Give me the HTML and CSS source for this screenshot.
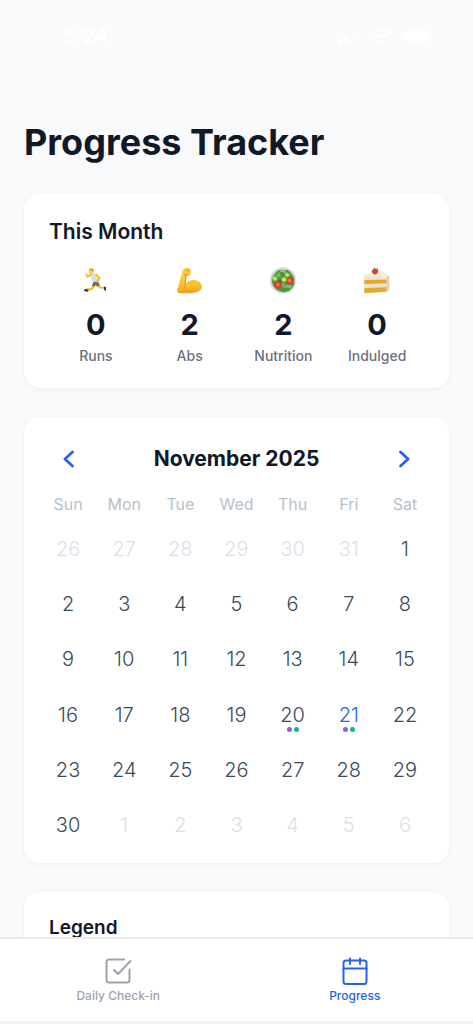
FILE: index.html
```html
<!DOCTYPE html>
<html lang="en">
<head>
<meta charset="utf-8">
<meta name="viewport" content="width=device-width, initial-scale=1">
<title>Progress Tracker</title>
<link rel="stylesheet" href="styles.css">
</head>
<body>
<div class="app">
  <div class="status">
    <span class="status-time">5:24</span>
    <div class="status-icons">
      <svg width="26" height="16" viewBox="0 0 26 16" aria-hidden="true"><rect x="1" y="10" width="4" height="5" rx="1"/><rect x="7" y="7" width="4" height="8" rx="1"/><g opacity=".3"><rect x="13" y="4" width="4" height="11" rx="1"/><rect x="19" y="1" width="4" height="14" rx="1"/></g></svg>
      <svg width="20" height="16" viewBox="0 0 20 16" aria-hidden="true"><g fill="none" stroke="#fff" stroke-width="3"><path d="M1 5.500a13 13 0 0 1 18 0"/><path d="M4.500 9a8 8 0 0 1 11 0"/></g><path d="M10 15l-3-3a4.500 4.500 0 0 1 6 0z"/></svg>
      <svg width="34" height="16" viewBox="0 0 34 16" aria-hidden="true"><rect x="1" y="1" width="29" height="14" rx="4.500" fill="none" stroke="#fff" opacity=".4"/><rect x="3" y="3" width="25" height="10" rx="3"/><path d="M31.500 6q2 2 0 4z" opacity=".4"/></svg>
    </div>
  </div>
  <main class="content">
    <h1 class="title">Progress Tracker</h1>

    <section class="card summary">
      <h2 class="card-title">This Month</h2>
      <div class="stats">
        <div class="stat">
          <svg class="emoji" viewBox="0 0 30 30" aria-hidden="true">
            <g fill="none" stroke="#fbb923" stroke-linecap="round" stroke-linejoin="round">
              <path d="M9.500 8.500L6 10.500 4.500 8" stroke-width="2"/>
              <path d="M13.500 20L9.500 24H5" stroke-width="2.200"/>
              <path d="M16 19.500l4 2.500 4 .5" stroke-width="2.200"/>
            </g>
            <path d="M10 7l4 .2 3.500 9.500-5 2.300-3-8z" fill="#d8dce1"/>
            <path d="M12.500 16l5-.3 1.500 4.500-2.500.8-2-1.500-2.500 2-1.500-2z" fill="#6b7078"/>
            <path d="M15.500 8.500l3 3.500-2 3.500" fill="none" stroke="#fbb923" stroke-width="2.300" stroke-linecap="round" stroke-linejoin="round"/>
            <ellipse cx="9.800" cy="4.500" rx="2.500" ry="3" fill="#ffc83d"/>
            <path d="M7.500 3q1-2.500 4-1.500 2 1 .5 3.500z" fill="#eba21b"/>
            <path d="M3 23.500l4 1-.5 2-4.500-.8zM23.500 21.500l2-.5.3 4.500-2-.5z" fill="#29266b"/>
          </svg>
          <strong class="stat-value">0</strong><span class="stat-label">Runs</span>
        </div>
        <div class="stat">
          <svg class="emoji" viewBox="0 0 30 30" aria-hidden="true">
            <defs><linearGradient id="skin" x2="0" y2="1"><stop stop-color="#ffd446"/><stop offset=".75" stop-color="#fbbd2c"/><stop offset="1" stop-color="#e89b20"/></linearGradient></defs>
            <path d="M7 4q1-3 5-3.200 3 0 4 3 .7 3-1 4.500l-3.500.7-1 9q3-4 8-4 6 0 9 5 2 7-8.500 8.500-7 1.200-16 .3-2-.3-1.700-2.800z" fill="url(#skin)"/>
            <path d="M8.500 7.500l2 1.500 3.800-.8M10 4q1-2 3-1M12.500 5l2-2M10.500 9l-1 11q.2 1.500-.5 2.500" fill="none" stroke="#d9911b" stroke-linecap="round"/>
          </svg>
          <strong class="stat-value">2</strong><span class="stat-label">Abs</span>
        </div>
        <div class="stat">
          <svg class="emoji" viewBox="0 0 30 30" aria-hidden="true">
            <circle cx="15" cy="14.500" r="14.500" fill="#dfe4e7"/><circle cx="15" cy="14.500" r="13" fill="#c3cbca"/>
            <path d="M5 9l3-4 4-2 4 1 4-1 4 4 3 5v7l-3 4-3 3-6 1-6-2-4-4-2-5z" fill="#4a9938"/>
            <path d="M6 10l5-5 2 6zM17 5l7 3-5 3zM13 16l5 3-3 4zM22 18l3 2-4 4z" fill="#6fbd4c"/>
            <path d="M7 16l6-4 2 5zM20 10l6 2-4 3z" fill="#2f7d2a"/>
            <path d="M12 5q4-2 6 2M17 22q3-3 6 0" fill="none" stroke="#c4aea5" stroke-width="1.700"/>
            <g fill="#dc3f2d"><circle cx="9.500" cy="19" r="4"/><circle cx="22" cy="14.500" r="4"/></g>
            <g fill="#f27a5a"><circle cx="9.500" cy="19" r="1.800"/><circle cx="22" cy="14.500" r="1.800"/></g>
            <g fill="#c4e67b" stroke="#66b53a"><circle cx="6.500" cy="12.500" r="2.400"/><circle cx="16" cy="13.500" r="2.700"/><circle cx="19.500" cy="8.500" r="2.400"/></g>
          </svg>
          <strong class="stat-value">2</strong><span class="stat-label">Nutrition</span>
        </div>
        <div class="stat">
          <svg class="emoji" viewBox="0 0 30 30" aria-hidden="true">
            <path d="M1 9.500L13 4q9-.5 15 5v16L25 27 1 28z" fill="#eee5cf"/>
            <path d="M1 9.500L13 4q9-.5 15 5l-3 2z" fill="#f6eedc"/>
            <path d="M25 11l3-2v16l-3 2z" fill="#dfd2b4"/>
            <path d="M1.500 14l23.500-.5v4l-23.500.8zM1.500 22.500l23.500-.8v4.500L1.500 28z" fill="#e5aa2d"/>
            <path d="M9.500 5q0-2.500 3-3 3.500-.5 4 2-1 3.800-4 4Q10 7.500 9.500 5z" fill="#dc3b2f"/>
            <path d="M11 2.500l1.500-2 1 1.500L16 1l-1 2.500z" fill="#55a13b"/>
          </svg>
          <strong class="stat-value">0</strong><span class="stat-label">Indulged</span>
        </div>
      </div>
    </section>

    <section class="card calendar">
      <header class="month">
        <button class="arrow" type="button" aria-label="Previous month"><svg width="28" height="28" viewBox="0 0 24 24"><path d="M15 18L8.500 12 15 6"/></svg></button>
        <h2 class="month-name">November 2025</h2>
        <button class="arrow" type="button" aria-label="Next month"><svg width="28" height="28" viewBox="0 0 24 24"><path d="M9 18l6.500-6L9 6"/></svg></button>
      </header>
      <table class="days">
        <thead><tr><th>Sun</th><th>Mon</th><th>Tue</th><th>Wed</th><th>Thu</th><th>Fri</th><th>Sat</th></tr></thead>
        <tbody>
          <tr><td class="out">26</td><td class="out">27</td><td class="out">28</td><td class="out">29</td><td class="out">30</td><td class="out">31</td><td>1</td></tr>
          <tr><td>2</td><td>3</td><td>4</td><td>5</td><td>6</td><td>7</td><td>8</td></tr>
          <tr><td>9</td><td>10</td><td>11</td><td>12</td><td>13</td><td>14</td><td>15</td></tr>
          <tr><td>16</td><td>17</td><td>18</td><td>19</td><td>20<span class="dots"><i class="dot abs"></i><i class="dot nutrition"></i></span></td><td class="today">21<span class="dots"><i class="dot abs"></i><i class="dot nutrition"></i></span></td><td>22</td></tr>
          <tr><td>23</td><td>24</td><td>25</td><td>26</td><td>27</td><td>28</td><td>29</td></tr>
          <tr><td>30</td><td class="out">1</td><td class="out">2</td><td class="out">3</td><td class="out">4</td><td class="out">5</td><td class="out">6</td></tr>
        </tbody>
      </table>
    </section>

    <section class="card legend"><h2 class="legend-title">Legend</h2></section>
  </main>

  <nav class="tabs">
    <a class="tab" href="#checkin">
      <svg width="28" height="28" viewBox="0 0 28 28" aria-hidden="true"><path d="M20 2.500H5A2.500 2.500 0 0 0 2.500 5v18A2.500 2.500 0 0 0 5 25.500h18a2.500 2.500 0 0 0 2.500-2.500V12.500M10 13l4 4L26.500 4"/></svg>
      <span>Daily Check-in</span>
    </a>
    <a class="tab active" href="#progress" aria-current="page">
      <svg width="28" height="28" viewBox="0 0 28 28" aria-hidden="true"><rect x="2.500" y="3.500" width="23" height="23.500" rx="2.500"/><path d="M9 1.500v5.500M19 1.500v5.500M2.500 11.500h23"/></svg>
      <span>Progress</span>
    </a>
  </nav>
</div>
</body>
</html>
```
FILE: styles.css
```css
* { box-sizing: border-box; }

body {
  margin: 0;
  background: #f9fafb;
  color: #111827;
  font-family: Inter, "Liberation Sans", sans-serif;
}

h1, h2 { margin: 0; }

.app {
  display: flex;
  flex-direction: column;
  height: 100vh;
  background: #f9fafc;
}

.status {
  display: flex;
  justify-content: space-between;
  align-items: center;
  flex: none;
  padding: 24px 38px 24px 64px;
  color: #fff;
}

.status-time { font-size: 20px; line-height: 24px; font-weight: 600; }
.status-icons { display: flex; gap: 9px; fill: #fff; }

.content {
  flex: 1;
  min-height: 0;
  overflow-y: auto;
  scrollbar-width: none;
  display: flex;
  flex-direction: column;
  gap: 29px;
  padding: 48px 24px 24px;
}

.title { font-size: 36px; line-height: 45px; font-weight: 700; }

.card {
  flex: none;
  padding: 24px 25px;
  border-radius: 16px;
  background: #fff;
  box-shadow: 0 1px 5px rgba(17, 24, 39, 0.05);
}

.summary { padding: 25px 25px 23px; }
.card-title { font-size: 21px; line-height: 26px; font-weight: 600; }

.stats { display: grid; grid-template-columns: repeat(4, 1fr); margin-top: 22px; }
.stat { display: flex; flex-direction: column; align-items: center; }
.emoji { width: 28px; height: 28px; }
.stat-value { margin-top: 12px; font-size: 29px; line-height: 36px; font-weight: 700; }
.stat-label { margin-top: 4px; font-size: 14px; line-height: 18px; font-weight: 500; color: #6b7280; }

.calendar { padding: 16px 16px 10px; }
.month { display: flex; align-items: center; justify-content: space-between; padding: 6px 15px; }
.month-name { font-size: 21px; line-height: 40px; font-weight: 700; }

.arrow {
  display: flex;
  padding: 0;
  border: 0;
  background: none;
  cursor: pointer;
}

.arrow svg { fill: none; stroke: #2563eb; stroke-width: 2.4; stroke-linecap: round; stroke-linejoin: round; }

.days { width: 100%; height: 368px; table-layout: fixed; border-collapse: collapse; text-align: center; }
.days th { height: 36px; padding: 2px 0 0; font-size: 16px; line-height: 20px; font-weight: 400; color: #b6c1cd; }
.days tbody { font-size: 20px; line-height: 24px; font-weight: 300; color: #384b5a; }
.days td { position: relative; padding: 0; }
.days .out { color: #d9e1e8; }
.days .today { color: #2563eb; }

.dots { position: absolute; inset: 40px 0 auto; display: flex; justify-content: center; gap: 2px; }
.dot { width: 5px; height: 5px; border-radius: 50%; }
.abs { background: #8b5cf6; }
.nutrition { background: #10b981; }

.legend-title { font-size: 19px; line-height: 24px; font-weight: 600; }

.tabs {
  flex: none;
  display: grid;
  grid-template-columns: 1fr 1fr;
  padding: 18px 0 17px;
  border-top: 2px solid #e9ebee;
  border-bottom: 3px solid #f2f2f3;
  background: #fff;
}

.tab {
  display: flex;
  flex-direction: column;
  align-items: center;
  gap: 3px;
  color: #9ca3af;
  font-size: 12px;
  line-height: 16px;
  font-weight: 500;
  text-decoration: none;
}

.tab svg { fill: none; stroke: currentColor; stroke-width: 2; stroke-linecap: round; stroke-linejoin: round; }
.tab.active { color: #2563eb; }
```
